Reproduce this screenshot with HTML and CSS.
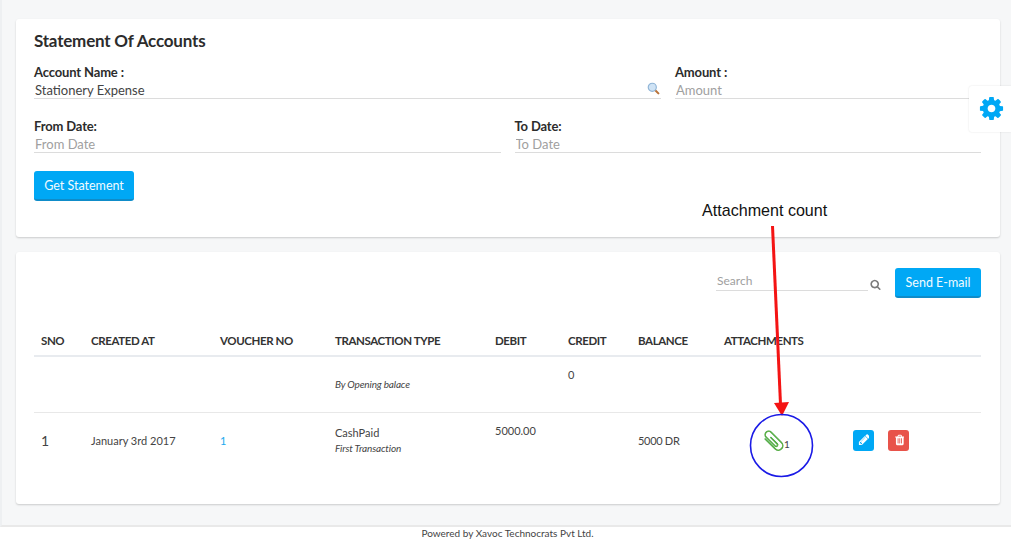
FILE: index.html
```html
<!DOCTYPE html>
<html lang="en">
<head>
    <meta charset="UTF-8">
    <title>Statement Of Accounts</title>
    <link rel="stylesheet" href="styles.css">
</head>
<body>
    <div class="page">
        <div class="panel filter-panel">
            <h1>Statement Of Accounts</h1>
            <div class="form-row account-row">
                <div class="field">
                    <label>Account Name :</label>
                    <div class="input-wrap">
                        <input type="text" value="Stationery Expense">
                        <svg class="lookup-icon" viewBox="0 0 16 16">
                            <path d="M9.500 9.500L14 14" stroke="#b9733a" stroke-width="2.600" stroke-linecap="round"/>
                            <circle cx="6.500" cy="6.500" r="5" fill="#cfe3f5" stroke="#8fb4d6" stroke-width="1.400"/>
                        </svg>
                    </div>
                </div>
                <div class="field">
                    <label>Amount :</label>
                    <input type="text" placeholder="Amount">
                </div>
            </div>
            <div class="form-row date-row">
                <div class="field">
                    <label>From Date:</label>
                    <input type="text" placeholder="From Date">
                </div>
                <div class="field">
                    <label>To Date:</label>
                    <input type="text" placeholder="To Date">
                </div>
            </div>
            <button class="btn statement-btn">Get Statement</button>
        </div>

        <div class="panel list-panel">
            <div class="toolbar">
                <div class="search">
                    <input type="text" placeholder="Search">
                    <svg class="search-icon" viewBox="0 0 1792 1792"><path fill="#7b7b7b" d="M1216 832q0-185-131.500-316.500t-316.500-131.500-316.500 131.500-131.500 316.500 131.500 316.500 316.500 131.500 316.500-131.500 131.500-316.500zm512 832q0 52-38 90t-90 38q-54 0-90-38l-343-342q-179 124-399 124-143 0-273.500-55.500t-225-150-150-225-55.500-273.500 55.500-273.500 150-225 225-150 273.500-55.500 273.500 55.500 225 150 150 225 55.500 273.500q0 220-124 399l343 343q37 37 37 90z"/></svg>
                </div>
                <button class="btn email-btn">Send E-mail</button>
            </div>
            <table>
                <thead>
                    <tr>
                        <th class="col-sno">SNO</th>
                        <th class="col-created">CREATED AT</th>
                        <th class="col-voucher">VOUCHER NO</th>
                        <th class="col-type">TRANSACTION TYPE</th>
                        <th class="col-debit">DEBIT</th>
                        <th class="col-credit">CREDIT</th>
                        <th class="col-balance">BALANCE</th>
                        <th class="col-attach">ATTACHMENTS</th>
                        <th></th>
                    </tr>
                </thead>
                <tbody>
                    <tr class="opening-row">
                        <td></td>
                        <td></td>
                        <td></td>
                        <td><em>By Opening balace</em></td>
                        <td></td>
                        <td class="top-cell">0</td>
                        <td></td>
                        <td></td>
                        <td></td>
                    </tr>
                    <tr class="entry-row">
                        <td class="sno">1</td>
                        <td>January 3rd 2017</td>
                        <td><a href="#">1</a></td>
                        <td>CashPaid<br><em>First Transaction</em></td>
                        <td class="top-cell">5000.00</td>
                        <td></td>
                        <td class="balance-cell">5000 DR</td>
                        <td>
                            <span class="attach">
                                <svg class="clip-icon" viewBox="0 0 20 20">
                                    <g transform="rotate(-45 10 10)" fill="none" stroke-linecap="round">
                                        <path d="M4.500 3V17a4.500 4.500 0 0 0 9 0V2.500a3.500 3.500 0 0 0-7 0V15a1.500 1.500 0 0 0 3 0V6" stroke="#2b9a34" stroke-width="1.500"/>
                                        <path d="M4.500 3V17a4.500 4.500 0 0 0 9 0V2.500a3.500 3.500 0 0 0-7 0V15a1.500 1.500 0 0 0 3 0V6" stroke="#b9d65c" stroke-width="0.400"/>
                                    </g>
                                </svg>
                                <span class="attach-count">1</span>
                            </span>
                        </td>
                        <td>
                            <div class="actions">
                                <span class="icon-btn edit-btn"><svg viewBox="0 192 1536 1536"><path fill="#fff" d="M491 1536l91-91-235-235-91 91v107h128v128h107zm523-928q0-22-22-22-10 0-17 7l-542 542q-7 7-7 17 0 22 22 22 10 0 17-7l542-542q7-7 7-17zm-54-192l416 416-832 832h-416v-416zm683 96q0 53-37 90l-166 166-416-416 166-165q36-38 90-38 53 0 91 38l235 234q37 39 37 91z"/></svg></span>
                                <span class="icon-btn delete-btn"><svg viewBox="0 0 1408 1792"><path fill="#fff" d="M704 1376v-704q0-14-9-23t-23-9h-64q-14 0-23 9t-9 23v704q0 14 9 23t23 9h64q14 0 23-9t9-23zm256 0v-704q0-14-9-23t-23-9h-64q-14 0-23 9t-9 23v704q0 14 9 23t23 9h64q14 0 23-9t9-23zm256 0v-704q0-14-9-23t-23-9h-64q-14 0-23 9t-9 23v704q0 14 9 23t23 9h64q14 0 23-9t9-23zm-544-992h448l-48-117q-7-9-17-11h-317q-10 2-17 11zm928 32v64q0 14-9 23t-23 9h-96v948q0 83-47 143.500t-113 60.500h-832q-66 0-113-58.500t-47-141.500v-952h-96q-14 0-23-9t-9-23v-64q0-14 9-23t23-9h309l70-167q15-37 54-63t79-26h320q40 0 79 26t54 63l70 167h309q14 0 23 9t9 23z"/></svg></span>
                            </div>
                        </td>
                    </tr>
                </tbody>
            </table>
        </div>
    </div>

    <div class="footer">Powered by Xavoc Technocrats Pvt Ltd.</div>

    <!-- floating settings tab -->
    <div class="settings-tab">
        <svg viewBox="0 0 1792 1792"><path fill="#00a8f5" d="M1152 896q0-106-75-181t-181-75-181 75-75 181 75 181 181 75 181-75 75-181zm512-109v222q0 12-8 23t-20 13l-185 28q-19 54-39 91 35 50 107 138 10 12 10 25t-9 23q-27 37-99 108t-94 71q-12 0-26-9l-138-108q-44 23-91 38-16 136-29 186-7 28-36 28h-222q-14 0-24.500-8.500t-11.500-21.500l-28-184q-49-16-90-37l-141 107q-10 9-25 9-14 0-25-11-126-114-165-168-7-10-7-23 0-12 8-23 15-21 51-66.500t54-70.500q-27-50-41-99l-183-27q-13-2-21-12.500t-8-23.500v-222q0-12 8-23t19-13l186-28q14-46 39-92-40-57-107-138-10-12-10-24 0-10 9-23 26-36 98.500-107.500t94.500-71.500q13 0 26 10l138 107q44-23 91-38 16-136 29-186 7-28 36-28h222q14 0 24.500 8.500t11.500 21.500l28 184q49 16 90 37l142-107q9-9 24-9 13 0 25 10 129 119 165 170 7 8 7 22 0 12-8 23-15 21-51 66.500t-54 70.500q26 50 41 98l183 28q13 2 21 12.500t8 23.500z"/></svg>
    </div>

    <!-- annotation drawn on top of the screenshot -->
    <div class="note-text">Attachment count</div>
    <svg class="note-marks" viewBox="0 0 1011 558">
        <line x1="772.500" y1="226" x2="780.500" y2="404" stroke="#f41414" stroke-width="3"/>
        <polygon points="774,403 789,402 782,416" fill="#f41414"/>
        <circle cx="781.500" cy="445.500" r="31" fill="none" stroke="#1a1ae6" stroke-width="1.600"/>
    </svg>
</body>
</html>
```

FILE: styles.css
```css
* {
    margin: 0;
    padding: 0;
    box-sizing: border-box;
}

body {
    font-family: Lato, "Open Sans", sans-serif;
    background-color: #fff;
    color: #333;
    height: 558px;
    overflow: hidden;
}

.page {
    background-color: #f6f7f8;
    height: 527px;
    padding: 19px 11px 0 14px;
    border-left: 2px solid #eef0f2;
    border-bottom: 2px solid #e9e9e9;
}

.panel {
    background-color: white;
    border-radius: 3px;
    box-shadow: 0 1px 2px rgba(0, 0, 0, 0.18);
}

.filter-panel {
    height: 218px;
    padding: 12px 19px 0 18px;
    margin-bottom: 15px;
}

h1 {
    font-size: 17px;
    line-height: 20px;
    font-weight: 700;
    letter-spacing: -0.2px;
    color: #2c2c2c;
    margin-bottom: 14px;
}

.form-row {
    display: grid;
    column-gap: 14px;
}

.account-row {
    grid-template-columns: 627px 1fr;
    margin-bottom: 20px;
}

.date-row {
    grid-template-columns: 1fr 1fr;
    margin-bottom: 18px;
}

label {
    display: block;
    font-size: 13px;
    line-height: 15px;
    font-weight: 700;
    letter-spacing: -0.15px;
    color: #2c2c2c;
}

input {
    display: block;
    width: 100%;
    height: 19px;
    padding: 2px 1px 0 1px;
    font-family: Lato, sans-serif;
    font-size: 13px;
    color: #444;
    border: none;
    border-bottom: 1px solid #dcdcdc;
    outline: none;
}

input::placeholder {
    color: #a0a0a0;
    opacity: 1;
}

.input-wrap {
    position: relative;
}

.lookup-icon {
    position: absolute;
    right: 1px;
    top: 2px;
    width: 13px;
    height: 13px;
}

.btn {
    font-family: Lato, sans-serif;
    font-size: 12.500px;
    color: #f2fbff;
    background-color: #00a8f5;
    border: none;
    border-bottom: 2px solid #0f8cc9;
    border-radius: 3px;
}

.statement-btn {
    width: 100px;
    height: 30px;
}

.list-panel {
    height: 252px;
    padding: 16px 19px 0 18px;
}

.toolbar {
    display: flex;
    justify-content: flex-end;
    align-items: flex-start;
    gap: 14px;
    height: 30px;
    margin-bottom: 27px;
}

.search {
    display: flex;
    align-items: flex-end;
    width: 165px;
    height: 23px;
    gap: 2px;
}

.search input {
    width: 152px;
    height: 23px;
    padding: 3px 1px 0 1px;
    font-size: 12px;
}

.search-icon {
    width: 11px;
    height: 11px;
    margin-bottom: 1px;
}

.email-btn {
    width: 86px;
    height: 30px;
}

table {
    width: 947px;
    border-collapse: collapse;
    table-layout: fixed;
    font-size: 11px;
    color: #444;
}

th {
    height: 31px;
    padding: 0 0 0 7px;
    text-align: left;
    font-size: 11.500px;
    font-weight: 700;
    color: #333;
    letter-spacing: -0.4px;
    border-bottom: 2px solid #e8ebef;
}

td {
    padding: 0 0 0 7px;
    vertical-align: middle;
    border-bottom: 1px solid #e8e8e8;
    line-height: 15px;
}

tbody tr:last-child td {
    border-bottom: none;
}

.col-sno { width: 50px; }
.col-created { width: 129px; }
.col-voucher { width: 115px; }
.col-type { width: 160px; }
.col-debit { width: 73px; }
.col-credit { width: 70px; }
.col-balance { width: 86px; }
.col-attach { width: 128px; }

em {
    font-size: 10px;
    font-style: italic;
    letter-spacing: -0.15px;
}

.opening-row td,
.entry-row td {
    height: 56px;
}

.opening-row .top-cell,
.entry-row .top-cell {
    vertical-align: top;
    padding-top: 10px;
}

.entry-row .sno {
    font-size: 14px;
}

.balance-cell {
    letter-spacing: -0.3px;
}

a {
    color: #1ba8ee;
    text-decoration: none;
}

.attach {
    display: flex;
    align-items: flex-end;
    padding-left: 40px;
}

.clip-icon {
    width: 20px;
    height: 20px;
    overflow: visible;
}

.attach-count {
    font-size: 10px;
    line-height: 12px;
}

.actions {
    display: flex;
    gap: 14px;
    padding-left: 1px;
}

.icon-btn {
    display: flex;
    align-items: center;
    justify-content: center;
    width: 21px;
    height: 21px;
    border-radius: 3px;
}

.icon-btn svg {
    width: 11px;
    height: 12px;
}

.edit-btn {
    background-color: #00a8f5;
}

.delete-btn {
    background-color: #e8534a;
}

.footer {
    padding-left: 4px;
    text-align: center;
    font-size: 10px;
    line-height: 13px;
    color: #444;
}

.settings-tab {
    position: absolute;
    left: 969px;
    top: 86px;
    width: 42px;
    height: 46px;
    padding: 0 0 2px 2px;
    display: flex;
    align-items: center;
    justify-content: center;
    background-color: white;
    border-radius: 3px 0 0 3px;
    box-shadow: 0 0 2px rgba(0, 0, 0, 0.12);
}

.settings-tab svg {
    width: 27px;
    height: 27px;
}

.note-text {
    position: absolute;
    left: 702px;
    top: 201px;
    font-family: "Liberation Sans", Arial, sans-serif;
    font-size: 16.100px;
    line-height: 18px;
    color: #111;
}

.note-marks {
    position: absolute;
    left: 0;
    top: 0;
    width: 1011px;
    height: 558px;
    pointer-events: none;
}
```
